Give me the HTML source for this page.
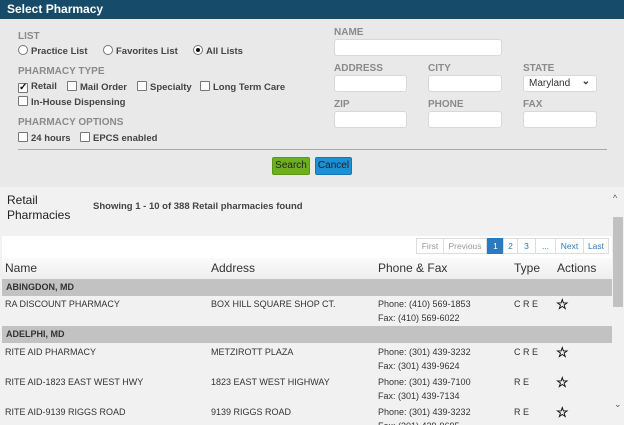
<!DOCTYPE html>
<html><head><style>
*{margin:0;padding:0;box-sizing:border-box}
html,body{width:624px;height:425px;overflow:hidden}
body{background:#e9e9e9;font-family:"Liberation Sans",sans-serif;position:relative;color:#333}
.a{position:absolute;white-space:nowrap}
.hdr{left:0;top:0;width:624px;height:19px;background:#164c6a;color:#fff;font-weight:bold;font-size:12px;line-height:19px;padding-left:7px}
.lbl{font-size:10px;color:#8a8a8a;font-weight:bold}
.opt{font-size:9.5px;color:#444;font-weight:bold}
.cb{display:inline-block;width:10px;height:10px;border:1px solid #777;background:#fff;vertical-align:-1px;margin-right:3px;border-radius:1px}
.rd{display:inline-block;width:10px;height:10px;border:1px solid #777;background:#fff;border-radius:50%;vertical-align:-1px;margin-right:3px;position:relative}
.inp{background:#fff;border:1px solid #d8d8d8;border-radius:3px;height:17px}
.btn{font-size:10px;color:#222;text-align:center;line-height:16px;height:18px;border-radius:2px}
.pg{top:238px;height:16px;border:1px solid #ddd;background:#fff;font-size:8.5px;color:#999;text-align:center;line-height:14px}
.th{top:261px;font-size:12px;color:#333}
.grp{left:2px;width:610px;height:17px;background:#c2c2c2;font-size:9px;font-weight:bold;line-height:17px;padding-left:4px;color:#333}
.t{font-size:9px;color:#333}
.ph{font-size:9px;color:#333;line-height:14px}
.star{font-size:14px;color:#111;font-weight:bold}
</style></head><body>
<div class="a hdr">Select Pharmacy</div>
<div class="a lbl" style="left:18px;top:31px">LIST</div>
<div class="a opt" style="left:18px;top:45px"><span class="rd"></span>Practice List</div>
<div class="a opt" style="left:103px;top:45px"><span class="rd"></span>Favorites List</div>
<div class="a opt" style="left:193px;top:45px"><span class="rd"><span style="position:absolute;left:2px;top:2px;width:4px;height:4px;border-radius:50%;background:#111"></span></span>All Lists</div>
<div class="a lbl" style="left:18px;top:66px">PHARMACY TYPE</div>
<div class="a opt" style="left:18px;top:81px"><span class="cb" style="font-size:10px;line-height:8px;text-align:center;color:#111">✓</span>Retail</div>
<div class="a opt" style="left:67px;top:81px"><span class="cb"></span>Mail Order</div>
<div class="a opt" style="left:137px;top:81px"><span class="cb"></span>Specialty</div>
<div class="a opt" style="left:200px;top:81px"><span class="cb"></span>Long Term Care</div>
<div class="a opt" style="left:18px;top:96px"><span class="cb"></span>In-House Dispensing</div>
<div class="a lbl" style="left:18px;top:117px">PHARMACY OPTIONS</div>
<div class="a opt" style="left:18px;top:132px"><span class="cb"></span>24 hours</div>
<div class="a opt" style="left:80px;top:132px"><span class="cb"></span>EPCS enabled</div>
<div class="a lbl" style="left:334px;top:27px">NAME</div>
<div class="a inp" style="left:334px;top:39px;width:168px"></div>
<div class="a lbl" style="left:334px;top:63px">ADDRESS</div>
<div class="a lbl" style="left:428px;top:63px">CITY</div>
<div class="a lbl" style="left:523px;top:63px">STATE</div>
<div class="a inp" style="left:334px;top:75px;width:73px"></div>
<div class="a inp" style="left:428px;top:75px;width:74px"></div>
<div class="a inp" style="left:523px;top:75px;width:74px;font-size:10px;line-height:15px;padding-left:5px;color:#333">Maryland<span style="position:absolute;right:6px;top:-2px;font-size:10px;font-weight:bold">⌄</span></div>
<div class="a lbl" style="left:334px;top:99px">ZIP</div>
<div class="a lbl" style="left:428px;top:99px">PHONE</div>
<div class="a lbl" style="left:523px;top:99px">FAX</div>
<div class="a inp" style="left:334px;top:111px;width:73px"></div>
<div class="a inp" style="left:428px;top:111px;width:74px"></div>
<div class="a inp" style="left:523px;top:111px;width:74px"></div>
<div class="a" style="left:18px;top:149px;width:589px;height:1px;background:#aaa"></div>
<div class="a btn" style="left:272px;top:157px;width:38px;background:#6db01c;border:1px solid #5a9a12">Search</div>
<div class="a btn" style="left:315px;top:157px;width:37px;background:#1c90d6;border:1px solid #1478b8">Cancel</div>
<div class="a" style="left:0;top:187px;width:612px;height:238px;background:#f1f1f1"></div>
<div class="a" style="left:7px;top:193px;font-size:12px;line-height:15px;color:#222;white-space:normal">Retail<br>Pharmacies</div>
<div class="a" style="left:93px;top:201px;font-size:9.5px;font-weight:bold;color:#444">Showing 1 - 10 of 388 Retail pharmacies found</div>
<div class="a" style="left:2px;top:236px;width:610px;height:22px;background:#fff"></div>
<div class="a pg" style="left:416px;width:28px">First</div>
<div class="a pg" style="left:443px;width:44px">Previous</div>
<div class="a pg" style="left:487px;width:17px;background:#2a7abf;border-color:#2a7abf;color:#fff">1</div>
<div class="a pg" style="left:503px;width:15px;color:#2a7abf">2</div>
<div class="a pg" style="left:517px;width:19px;color:#2a7abf">3</div>
<div class="a pg" style="left:535px;width:21px;color:#2a7abf">...</div>
<div class="a pg" style="left:555px;width:29px;color:#2a7abf">Next</div>
<div class="a pg" style="left:583px;width:26px;color:#2a7abf">Last</div>
<div class="a" style="left:2px;top:258px;width:610px;height:21px;background:linear-gradient(#fafafa,#eee)"></div>
<div class="a th" style="left:5px">Name</div>
<div class="a th" style="left:211px">Address</div>
<div class="a th" style="left:378px">Phone &amp; Fax</div>
<div class="a th" style="left:514px">Type</div>
<div class="a th" style="left:557px">Actions</div>
<div class="a grp" style="top:279px">ABINGDON, MD</div>
<div class="a t" style="left:5px;top:299px">RA DISCOUNT PHARMACY</div>
<div class="a t" style="left:211px;top:299px">BOX HILL SQUARE SHOP CT.</div>
<div class="a ph" style="left:378px;top:297px">Phone: (410) 569-1853<br>Fax: (410) 569-6022</div>
<div class="a t" style="left:514px;top:299px">C R E</div>
<div class="a star" style="left:556px;top:296px">☆</div>
<div class="a grp" style="top:326px">ADELPHI, MD</div>
<div class="a t" style="left:5px;top:347px">RITE AID PHARMACY</div>
<div class="a t" style="left:211px;top:347px">METZIROTT PLAZA</div>
<div class="a ph" style="left:378px;top:345px">Phone: (301) 439-3232<br>Fax: (301) 439-9624</div>
<div class="a t" style="left:514px;top:347px">C R E</div>
<div class="a star" style="left:556px;top:344px">☆</div>
<div class="a t" style="left:5px;top:377px">RITE AID-1823 EAST WEST HWY</div>
<div class="a t" style="left:211px;top:377px">1823 EAST WEST HIGHWAY</div>
<div class="a ph" style="left:378px;top:375px">Phone: (301) 439-7100<br>Fax: (301) 439-7134</div>
<div class="a t" style="left:514px;top:377px">R E</div>
<div class="a star" style="left:556px;top:374px">☆</div>
<div class="a t" style="left:5px;top:407px">RITE AID-9139 RIGGS ROAD</div>
<div class="a t" style="left:211px;top:407px">9139 RIGGS ROAD</div>
<div class="a ph" style="left:378px;top:405px">Phone: (301) 439-3232<br>Fax: (301) 439-9695</div>
<div class="a t" style="left:514px;top:407px">R E</div>
<div class="a star" style="left:556px;top:404px">☆</div>
<div class="a" style="left:612px;top:187px;width:12px;height:238px;background:#f1f1f1"></div>
<div class="a" style="left:613px;top:193px;font-size:9px;color:#555">^</div>
<div class="a" style="left:613px;top:217px;width:10px;height:90px;background:#c1c1c1"></div>
<div class="a" style="left:614px;top:399px;font-size:9px;color:#555">⌄</div>
</body></html>
